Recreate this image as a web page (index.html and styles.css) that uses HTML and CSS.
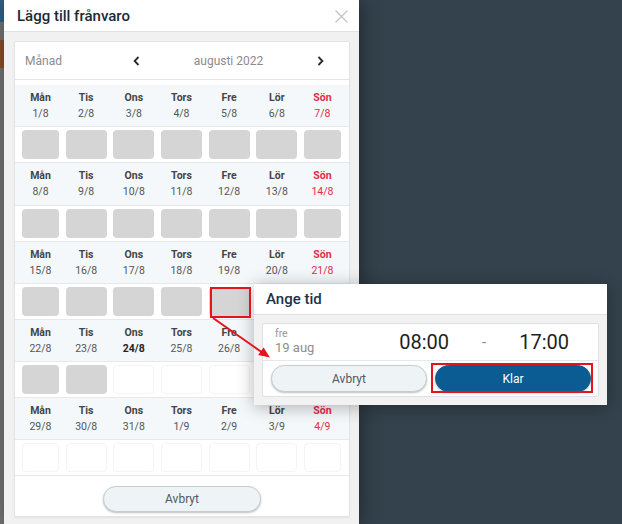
FILE: index.html
```html
<!DOCTYPE html>
<html lang="sv">

<head>
    <meta charset="UTF-8">
    <meta name="viewport" content="width=device-width, initial-scale=1.0">
    <title>Lägg till frånvaro</title>
    <link rel="stylesheet" href="styles.css">
</head>

<body>
    <div class="screen">
        <div class="edge"></div>

        <section class="modal">
            <header class="modal-head">
                <h1>Lägg till frånvaro</h1>
                <button class="close" type="button" aria-label="Stäng">
                    <svg width="13" height="13" viewBox="0 0 13 13">
                        <path d="M0.5 0.5 L12.5 12.5 M12.5 0.5 L0.5 12.5" stroke="#c4c4c4" stroke-width="1.3" fill="none" />
                    </svg>
                </button>
            </header>

            <div class="modal-body">
                <div class="card">
                    <div class="month-bar">
                        <span class="month-label">Månad</span>
                        <svg class="chev" width="7" height="10" viewBox="0 0 7 10">
                            <path d="M5.5 1 L1.6 5 L5.5 9" stroke="#2b2b2b" stroke-width="1.8" fill="none" />
                        </svg>
                        <span class="month-name">augusti 2022</span>
                        <svg class="chev" width="7" height="10" viewBox="0 0 7 10">
                            <path d="M1.5 1 L5.4 5 L1.5 9" stroke="#2b2b2b" stroke-width="1.8" fill="none" />
                        </svg>
                    </div>

                    <div class="weeks">
                        <div class="week-head">
                            <div class="day"><b>Mån</b><span>1/8</span></div>
                            <div class="day"><b>Tis</b><span>2/8</span></div>
                            <div class="day"><b>Ons</b><span>3/8</span></div>
                            <div class="day"><b>Tors</b><span>4/8</span></div>
                            <div class="day"><b>Fre</b><span>5/8</span></div>
                            <div class="day"><b>Lör</b><span>6/8</span></div>
                            <div class="day sunday"><b>Sön</b><span>7/8</span></div>
                        </div>
                        <div class="week-tiles">
                            <div class="tile"></div><div class="tile"></div><div class="tile"></div><div class="tile"></div>
                            <div class="tile"></div><div class="tile"></div><div class="tile"></div>
                        </div>

                        <div class="week-head">
                            <div class="day"><b>Mån</b><span>8/8</span></div>
                            <div class="day"><b>Tis</b><span>9/8</span></div>
                            <div class="day"><b>Ons</b><span>10/8</span></div>
                            <div class="day"><b>Tors</b><span>11/8</span></div>
                            <div class="day"><b>Fre</b><span>12/8</span></div>
                            <div class="day"><b>Lör</b><span>13/8</span></div>
                            <div class="day sunday"><b>Sön</b><span>14/8</span></div>
                        </div>
                        <div class="week-tiles">
                            <div class="tile"></div><div class="tile"></div><div class="tile"></div><div class="tile"></div>
                            <div class="tile"></div><div class="tile"></div><div class="tile"></div>
                        </div>

                        <div class="week-head">
                            <div class="day"><b>Mån</b><span>15/8</span></div>
                            <div class="day"><b>Tis</b><span>16/8</span></div>
                            <div class="day"><b>Ons</b><span>17/8</span></div>
                            <div class="day"><b>Tors</b><span>18/8</span></div>
                            <div class="day"><b>Fre</b><span>19/8</span></div>
                            <div class="day"><b>Lör</b><span>20/8</span></div>
                            <div class="day sunday"><b>Sön</b><span>21/8</span></div>
                        </div>
                        <div class="week-tiles">
                            <div class="tile"></div><div class="tile"></div><div class="tile"></div><div class="tile"></div>
                            <div class="tile"></div><div class="tile"></div><div class="tile"></div>
                        </div>

                        <div class="week-head">
                            <div class="day"><b>Mån</b><span>22/8</span></div>
                            <div class="day"><b>Tis</b><span>23/8</span></div>
                            <div class="day today"><b>Ons</b><span>24/8</span></div>
                            <div class="day"><b>Tors</b><span>25/8</span></div>
                            <div class="day"><b>Fre</b><span>26/8</span></div>
                            <div class="day"><b>Lör</b><span>27/8</span></div>
                            <div class="day sunday"><b>Sön</b><span>28/8</span></div>
                        </div>
                        <div class="week-tiles">
                            <div class="tile"></div><div class="tile"></div><div class="tile empty"></div><div class="tile empty"></div>
                            <div class="tile empty"></div><div class="tile empty"></div><div class="tile empty"></div>
                        </div>

                        <div class="week-head">
                            <div class="day"><b>Mån</b><span>29/8</span></div>
                            <div class="day"><b>Tis</b><span>30/8</span></div>
                            <div class="day"><b>Ons</b><span>31/8</span></div>
                            <div class="day"><b>Tors</b><span>1/9</span></div>
                            <div class="day"><b>Fre</b><span>2/9</span></div>
                            <div class="day"><b>Lör</b><span>3/9</span></div>
                            <div class="day sunday"><b>Sön</b><span>4/9</span></div>
                        </div>
                        <div class="week-tiles">
                            <div class="tile empty"></div><div class="tile empty"></div><div class="tile empty"></div><div class="tile empty"></div>
                            <div class="tile empty"></div><div class="tile empty"></div><div class="tile empty"></div>
                        </div>
                    </div>

                    <div class="card-foot">
                        <button class="pill" type="button">Avbryt</button>
                    </div>
                </div>
            </div>
        </section>

        <div class="popup">
            <div class="popup-head">Ange tid</div>
            <div class="popup-body">
                <div class="slot">
                    <div class="slot-top">
                        <div class="slot-date">
                            <span class="dow">fre</span>
                            <span class="dm">19 aug</span>
                        </div>
                        <div class="slot-times">
                            <span class="time">08:00</span>
                            <span class="dash">-</span>
                            <span class="time">17:00</span>
                        </div>
                    </div>
                    <div class="slot-actions">
                        <button class="pill" type="button">Avbryt</button>
                        <button class="pill primary" type="button">Klar</button>
                    </div>
                </div>
            </div>
        </div>

        <!-- annotations drawn on top of the screenshot -->
        <svg class="annot" width="622" height="524" viewBox="0 0 622 524">
            <rect x="211" y="288" width="39" height="29" fill="none" stroke="#e3141b" stroke-width="2" />
            <line x1="213" y1="318" x2="263" y2="353" stroke="#e3141b" stroke-width="2" />
            <polygon points="270,357.5 258.2,355 263.6,347.4" fill="#e3141b" />
            <rect x="432" y="364" width="160" height="28" fill="none" stroke="#e3141b" stroke-width="2" />
        </svg>
    </div>
</body>

</html>
```

FILE: styles.css
```css
* {
    box-sizing: border-box;
    margin: 0;
    padding: 0;
}

body {
    font-family: Roboto, "Liberation Sans", sans-serif;
    background: #33424c;
    width: 622px;
    height: 524px;
    overflow: hidden;
}

.screen {
    position: relative;
    display: flex;
    height: 524px;
}

.edge {
    width: 4px;
    background: linear-gradient(to bottom, #2e5f86 0 22px, #707070 22px 40px, #8a4a22 40px 68px, #707070 68px);
}

.modal {
    width: 355px;
    display: flex;
    flex-direction: column;
    background: #f1f1f1;
    box-shadow: 3px 0 18px rgba(0, 0, 0, 0.35);
}

.modal-head {
    height: 32px;
    background: #fff;
    border-bottom: 1px solid #e2e2e2;
    display: flex;
    align-items: center;
    justify-content: space-between;
    padding: 0 11px 0 13px;
}

.modal-head h1 {
    font-size: 15px;
    font-weight: 500;
    color: #1c2a36;
}

.close {
    border: none;
    background: none;
    display: flex;
    padding-top: 1px;
}

.modal-body {
    flex: 1;
    padding: 9px 9px 0 10px;
}

.card {
    background: #fff;
    border: 1px solid #e3e3e3;
    border-radius: 2px;
    box-shadow: 0 1px 2px rgba(0, 0, 0, 0.06);
}

.month-bar {
    height: 38px;
    display: flex;
    align-items: center;
    padding: 0 25px 0 10px;
    border-bottom: 1px solid #e4e4e4;
    font-size: 12px;
    color: #8c8c8c;
}

.month-label {
    width: 108px;
}

.month-name {
    flex: 1;
    text-align: center;
}

.weeks {
    padding-top: 5px;
}

.week-head,
.week-tiles {
    display: grid;
    grid-template-columns: 37px repeat(5, 41px) 37px;
    justify-content: space-between;
    border-bottom: 1px solid #e6e9eb;
}

.week-head {
    padding: 5px 8px 4.3px 7px;
    background: #f4f8fa;
}

.day {
    display: flex;
    flex-direction: column;
    align-items: center;
    font-size: 10.5px;
    line-height: 16px;
    color: #555;
}

.day b {
    font-weight: 700;
    color: #444;
}

.day.today span {
    font-weight: 700;
    color: #262626;
}

.day.sunday b,
.day.sunday span {
    color: #e52a4b;
}

.week-tiles {
    padding: 3px 8px 3px 7px;
}

.tile {
    height: 29px;
    border-radius: 4px;
    background: #d5d5d5;
}

.tile.empty {
    background: #fff;
    border: 1px solid #f2f4f5;
}

.card-foot {
    display: flex;
    justify-content: center;
    padding: 10px 0 4px;
}

.pill {
    height: 26px;
    width: 158px;
    border: 1px solid #c6cdd2;
    border-radius: 14px;
    background: #eef3f6;
    box-shadow: 0 1px 2px rgba(0, 0, 0, 0.25);
    font-family: inherit;
    font-size: 12px;
    color: #505a60;
}

.pill.primary {
    background: #0a5c93;
    border-color: #0a5c93;
    color: #fff;
}

.popup {
    position: absolute;
    left: 254px;
    top: 284px;
    width: 353px;
    background: #f2f2f2;
    box-shadow: 0 2px 16px rgba(0, 0, 0, 0.3);
}

.popup-head {
    height: 31px;
    background: #fff;
    border-bottom: 1px solid #e0e0e0;
    padding-left: 12px;
    display: flex;
    align-items: center;
    font-size: 15px;
    font-weight: 500;
    color: #19324b;
}

.popup-body {
    padding: 8px;
}

.slot {
    background: #fff;
    border: 1px solid #dde2e5;
    border-radius: 2px;
}

.slot-top {
    height: 37px;
    display: flex;
    align-items: center;
    padding: 0 29px 0 12px;
    border-bottom: 1px solid #e6e9eb;
}

.slot-date {
    display: flex;
    flex-direction: column;
    color: #9a9a9a;
}

.dow {
    font-size: 10.5px;
    line-height: 12px;
}

.dm {
    font-size: 13px;
    line-height: 16px;
    color: #8e8e8e;
}

.slot-times {
    margin-left: auto;
    display: flex;
    align-items: center;
    column-gap: 33px;
}

.time {
    font-size: 20px;
    color: #1e1e1e;
}

.dash {
    font-size: 15px;
    color: #8a8a8a;
}

.slot-actions {
    display: grid;
    grid-template-columns: 1fr 1fr;
    column-gap: 8px;
    padding: 4px 7px 4px 8px;
}

.slot-actions .pill {
    width: auto;
    height: 27px;
}

.annot {
    position: absolute;
    left: 0;
    top: 0;
    pointer-events: none;
}
```
